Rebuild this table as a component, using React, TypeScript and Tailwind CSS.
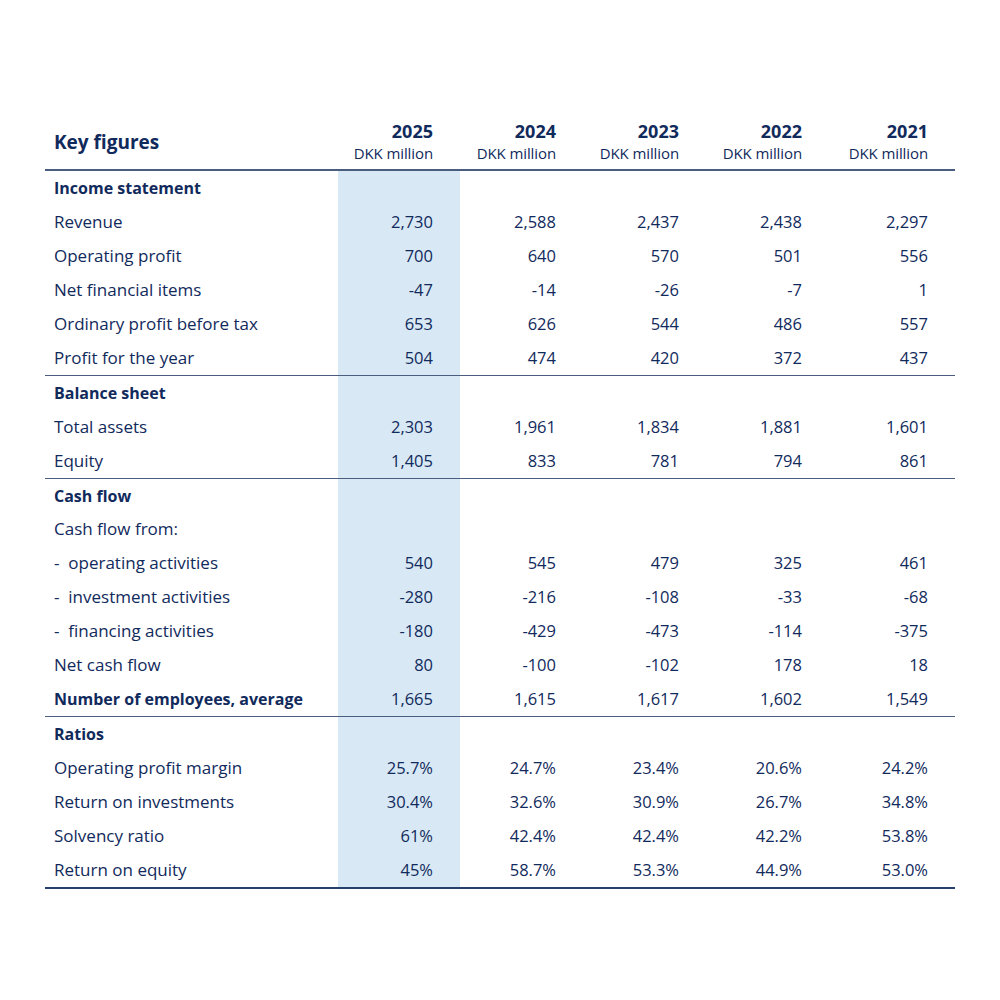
import React from "react";

type Row = { label: string; vals?: string[]; bold?: boolean; section?: boolean; border?: boolean; last?: boolean; tight?: boolean };

const rows: Row[] = [
  { label: "Income statement", section: true },
  { label: "Revenue", vals: ["2,730", "2,588", "2,437", "2,438", "2,297"] },
  { label: "Operating profit", vals: ["700", "640", "570", "501", "556"] },
  { label: "Net financial items", vals: ["-47", "-14", "-26", "-7", "1"] },
  { label: "Ordinary profit before tax", vals: ["653", "626", "544", "486", "557"] },
  { label: "Profit for the year", vals: ["504", "474", "420", "372", "437"], border: true },
  { label: "Balance sheet", section: true },
  { label: "Total assets", vals: ["2,303", "1,961", "1,834", "1,881", "1,601"] },
  { label: "Equity", vals: ["1,405", "833", "781", "794", "861"], border: true },
  { label: "Cash flow", section: true, tight: true },
  { label: "Cash flow from:" },
  { label: "-  operating activities", vals: ["540", "545", "479", "325", "461"] },
  { label: "-  investment activities", vals: ["-280", "-216", "-108", "-33", "-68"] },
  { label: "-  financing activities", vals: ["-180", "-429", "-473", "-114", "-375"] },
  { label: "Net cash flow", vals: ["80", "-100", "-102", "178", "18"] },
  { label: "Number of employees, average", vals: ["1,665", "1,615", "1,617", "1,602", "1,549"], bold: true, border: true },
  { label: "Ratios", section: true },
  { label: "Operating profit margin", vals: ["25.7%", "24.7%", "23.4%", "20.6%", "24.2%"] },
  { label: "Return on investments", vals: ["30.4%", "32.6%", "30.9%", "26.7%", "34.8%"] },
  { label: "Solvency ratio", vals: ["61%", "42.4%", "42.4%", "42.2%", "53.8%"] },
  { label: "Return on equity", vals: ["45%", "58.7%", "53.3%", "44.9%", "53.0%"], last: true },
];

const years = ["2025", "2024", "2023", "2022", "2021"];

export default function App() {
  return (
    <div className="w-[1000px] h-[1000px] bg-white text-[#112a5c]" style={{ fontFamily: '"Open Sans", "Noto Sans", sans-serif' }}>
      <div className="w-[910px] mx-auto pt-[116px]">
        <div className="grid grid-cols-[293px_122px_123px_123px_123px_126px] border-b-2 border-[#4a5d7e] h-[55px]">
          <div className="pl-[9px] flex items-center text-[19px] font-bold pb-[1px]">Key figures</div>
          {years.map((y) => (
            <div key={y} className="flex flex-col items-end pr-[27px]">
              <div className="text-[18px] font-bold leading-[28px] pt-[1px]">{y}</div>
              <div className="text-[15px] leading-[16px] tracking-[-0.1px]">DKK million</div>
            </div>
          ))}
        </div>
        {rows.map((r, i) => (
          <div
            key={i}
            className={
              "grid grid-cols-[293px_122px_123px_123px_123px_126px] " +
              (r.last
                ? "h-[36px] border-b-2 border-[#26406b]"
                : r.border
                ? "h-[35px] border-b border-[#4a5d7e]"
                : r.tight
                ? "h-[33px]"
                : "h-[34px]")
            }
          >
            <div
              className={
                "pl-[9px] flex items-center whitespace-pre " +
                (r.section || r.bold ? "font-bold text-[16px] " : "text-[17px] ")
              }
            >
              {r.label}
            </div>
            {[0, 1, 2, 3, 4].map((c) => (
              <div
                key={c}
                className={
                  "flex items-center justify-end pr-[27px] text-[16.5px] " + (c === 0 ? "bg-[#d8e9f5]" : "")
                }
              >
                {r.vals ? r.vals[c] : ""}
              </div>
            ))}
          </div>
        ))}
      </div>
    </div>
  );
}
